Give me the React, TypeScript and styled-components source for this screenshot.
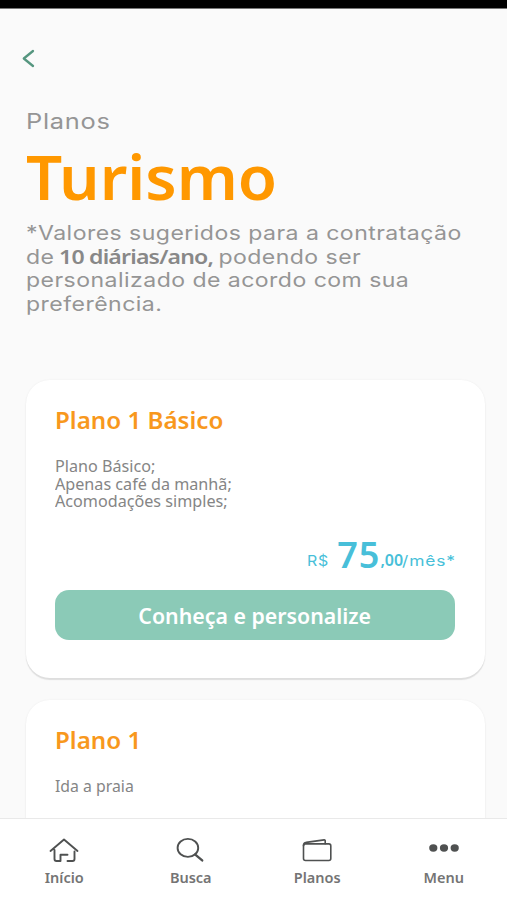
import React from 'react';
import styled, { createGlobalStyle } from 'styled-components';

const GlobalStyle = createGlobalStyle`
  * { box-sizing: border-box; }
  html, body { margin: 0; padding: 0; overflow: hidden; }
  body { background: #fafafa; font-family: "Noto Sans", sans-serif; }
`;

const Screen = styled.div`
  display: flex;
  flex-direction: column;
  width: 507px;
  height: 900px;
  overflow: hidden;
  background: #fafafa;
`;

const StatusBar = styled.div`
  flex: none;
  height: 9px;
  background: #000;
  border-bottom: 1px solid #777;
`;

const Content = styled.main`
  flex: 1;
  min-height: 0;
  overflow: hidden;
  padding: 40px 22px 0 26px;
`;

const BackButton = styled.button`
  display: block;
  border: 0;
  padding: 0;
  margin: 0 0 0 -5px;
  background: none;
  height: 20px;
  svg { display: block; }
`;

const Wide = styled.span<{ $scale: number; $origin?: string }>`
  display: inline-block;
  white-space: nowrap;
  transform: scaleX(${p => p.$scale});
  transform-origin: ${p => p.$origin ?? 'left'} center;
`;

const Eyebrow = styled.div`
  margin-top: 39px;
  height: 28px;
  font: 400 21px/28px Inter, sans-serif;
  letter-spacing: 0.6px;
  color: #959595;
`;

const Title = styled.h1`
  margin: 4px 0 0;
  height: 72px;
  font: 650 62px/72px "Noto Sans", sans-serif;
  color: #ff9800;
`;

const Intro = styled.p`
  margin: 10px 0 0;
  height: 96px;
  font: 400 20px/23.6px Inter, sans-serif;
  letter-spacing: 0.4px;
  color: #959595;
  strong {
    margin: 0 -1.5px 0 -2px;
    font: 600 20px/20px "Noto Sans", sans-serif;
    letter-spacing: -0.7px;
    color: #888;
  }
`;

const Card = styled.section`
  margin-top: 22px;
  height: 298px;
  padding: 25px 29px 0;
  background: #fff;
  border-radius: 24px;
  box-shadow: 0 2px 1px #dedede, 0 0 2px #ececec;
`;

const Cards = styled.div`
  margin-top: 62px;
`;

const CardTitle = styled.h2`
  margin: 0;
  height: 30px;
  font: 600 23px/30px "Noto Sans", sans-serif;
  color: #f8981d;
`;

const Features = styled.div`
  margin-top: 23px;
  height: 54px;
  font: 400 15.5px/17.5px "Noto Sans", sans-serif;
  color: #858585;
`;

const Price = styled.div`
  display: flex;
  justify-content: flex-end;
  align-items: baseline;
  margin-top: 18px;
  height: 46px;
  line-height: 46px;
  color: #48bfd9;
`;

const Currency = styled(Wide)`
  font-family: Inter, sans-serif;
  font-size: 14.5px;
  margin-right: 8px;
  letter-spacing: 0.8px;
`;

const Amount = styled.span`
  font-size: 36px;
  font-weight: 600;
  letter-spacing: 1px;
  transform: translateY(2px);
`;

const Cents = styled.span`
  font-size: 16px;
  font-weight: 600;
`;

const Period = styled(Wide)`
  margin-left: 8px;
  font-family: Inter, sans-serif;
  font-size: 14.5px;
  letter-spacing: 0.7px;
`;

const Action = styled.button`
  display: flex;
  align-items: center;
  justify-content: center;
  width: 400px;
  height: 50px;
  margin-top: 14px;
  border: 0;
  padding: 1px 0 0;
  border-radius: 14px;
  background: #8bcab7;
  color: #fff;
  font: 600 21px/28px "Noto Sans", sans-serif;
`;

const NavBar = styled.nav`
  flex: none;
  display: grid;
  grid-template-columns: repeat(4, 126.5px);
  height: 82px;
  padding-left: 1px;
  border-top: 1px solid #e9e9e9;
  background: #fff;
`;

const NavItem = styled.a`
  display: flex;
  flex-direction: column;
  align-items: center;
  padding-top: 18px;
  font: 600 14.5px/20px "Noto Sans", sans-serif;
  color: #747474;
  svg { display: block; margin-bottom: 2px; }
`;

const stroke = {
  fill: 'none',
  stroke: '#4f5151',
  strokeWidth: 1.9,
  strokeLinecap: 'round' as const,
  strokeLinejoin: 'round' as const,
};

const HomeIcon = () => (
  <svg width="30" height="28" viewBox="0 0 30 28" {...stroke}>
    <path d="M1.5 14 15 2.5 28.5 14M5.5 13V22Q5.5 24 7.5 24H11.5V17.8H18.5M18.5 24H23.5Q25.5 24 25.5 22V14.5" />
  </svg>
);

const SearchIcon = () => (
  <svg width="30" height="28" viewBox="0 0 30 28" {...stroke}>
    <ellipse cx="11.9" cy="10.9" rx="10.3" ry="9" />
    <path d="m19 17.4 7.2 6" strokeWidth="2.4" />
  </svg>
);

const WalletIcon = () => (
  <svg width="30" height="28" viewBox="0 0 30 28" {...stroke} strokeWidth={1.6}>
    <rect x="1.5" y="6.9" width="27.3" height="16.6" rx="2" />
    <path d="M1.5 8.7Q1.5 5.7 4.2 5.4L22.2 2.9Q23.2 2.8 23.2 3.7V6.7" />
  </svg>
);

const DotsIcon = () => (
  <svg width="30" height="28" viewBox="0 0 30 28" fill="#4f5151">
    <ellipse cx="4.3" cy="11" rx="4.1" ry="3.7" />
    <ellipse cx="15" cy="11" rx="4.1" ry="3.7" />
    <ellipse cx="25.7" cy="11" rx="4.1" ry="3.7" />
  </svg>
);

const navItems = [
  { label: 'Início', icon: <HomeIcon /> },
  { label: 'Busca', icon: <SearchIcon /> },
  { label: 'Planos', icon: <WalletIcon /> },
  { label: 'Menu', icon: <DotsIcon /> },
];

export default function App() {
  return (
    <Screen>
      <GlobalStyle />
      <StatusBar />
      <Content>
        <BackButton aria-label="Voltar">
          <svg width="16" height="20" viewBox="0 0 16 20" fill="none" stroke="#55967f" strokeWidth="2.3" strokeLinecap="round" strokeLinejoin="round">
            <path d="M12 2 2.8 9.5 12 17" />
          </svg>
        </BackButton>
        <Eyebrow><Wide $scale={1.21}>Planos</Wide></Eyebrow>
        <Title><Wide $scale={1.027}>Turismo</Wide></Title>
        <Intro>
          <Wide $scale={1.152}>
            *Valores sugeridos para a contratação<br />
            de <strong>10 diárias/ano,</strong> podendo ser<br />
            personalizado de acordo com sua<br />
            preferência.
          </Wide>
        </Intro>
        <Cards>
          <Card>
            <CardTitle><Wide $scale={1.05}>Plano 1 Básico</Wide></CardTitle>
            <Features>
              <Wide $scale={1.042}>
                Plano Básico;<br />
                Apenas café da manhã;<br />
                Acomodações simples;
              </Wide>
            </Features>
            <Price>
              <Currency $scale={1.1} $origin="right">R$</Currency>
              <Amount>75</Amount>
              <Cents>,00</Cents>
              <Period $scale={1.2} $origin="right">/mês*</Period>
            </Price>
            <Action><Wide $scale={1.015} $origin="center">Conheça e personalize</Wide></Action>
          </Card>
          <Card>
            <CardTitle><Wide $scale={1.05}>Plano 1</Wide></CardTitle>
            <Features><Wide $scale={1.02}>Ida a praia</Wide></Features>
          </Card>
        </Cards>
      </Content>
      <NavBar>
        {navItems.map(item => (
          <NavItem key={item.label}>
            {item.icon}
            <span>{item.label}</span>
          </NavItem>
        ))}
      </NavBar>
    </Screen>
  );
}
